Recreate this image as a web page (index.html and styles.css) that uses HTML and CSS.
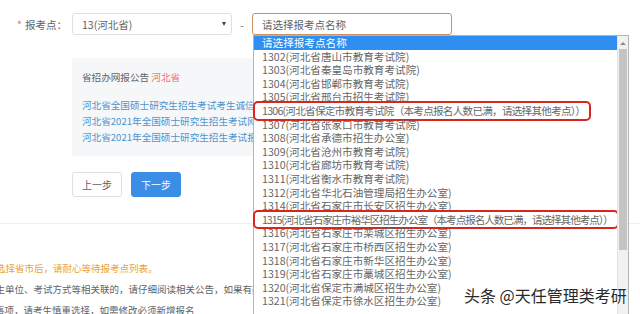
FILE: index.html
```html
<!DOCTYPE html>
<html lang="zh-CN">
<head>
<meta charset="utf-8">
<link rel="stylesheet" href="styles.css">
</head>
<body>
<div class="page">
  <div class="form-row">
    <div class="label"><span class="req">*</span>报考点：</div>
    <div class="select sel1"><span>13(河北省)</span><span class="caret"></span></div>
    <span class="dash">-</span>
    <div class="select sel2"><span>请选择报考点名称</span></div>
  </div>

  <div class="notice">
    <div class="notice-title">省招办网报公告 <span class="red">河北省</span></div>
    <div class="links">
      <a>河北省全国硕士研究生招生考试考生诚信考试承诺书</a>
      <a>河北省2021年全国硕士研究生招生考试网上报名公告</a>
      <a>河北省2021年全国硕士研究生招生考试报名须知</a>
    </div>
  </div>

  <div class="buttons">
    <button class="btn btn-plain">上一步</button>
    <button class="btn btn-primary">下一步</button>
  </div>

  <div class="divider"></div>

  <div class="tips">
    <p class="tip tip-warn">请选择省市后，请耐心等待报考点列表。</p>
    <p class="tip tip-2">招生单位、考试方式等相关联的，请仔细阅读相关公告，如果有疑问请咨询</p>
    <p class="tip tip-3">事项，请考生慎重选择，如需修改必须新增报名</p>
  </div>

  <div class="dropdown">
    <ul class="options">
      <li class="selected">请选择报考点名称</li>
      <li>1302(河北省唐山市教育考试院)</li>
      <li>1303(河北省秦皇岛市教育考试院)</li>
      <li>1304(河北省邯郸市教育考试院)</li>
      <li>1305(河北省邢台市招生考试院)</li>
      <li><span class="boxed b1">1306(河北省保定市教育考试院（本考点报名人数已满，请选择其他考点））</span></li>
      <li>1307(河北省张家口市教育考试院)</li>
      <li>1308(河北省承德市招生办公室)</li>
      <li>1309(河北省沧州市教育考试院)</li>
      <li>1310(河北省廊坊市教育考试院)</li>
      <li>1311(河北省衡水市教育考试院)</li>
      <li>1312(河北省华北石油管理局招生办公室)</li>
      <li>1314(河北省石家庄市长安区招生办公室)</li>
      <li><span class="boxed b2">1315(河北省石家庄市裕华区招生办公室（本考点报名人数已满，请选择其他考点））</span></li>
      <li>1316(河北省石家庄市栾城区招生办公室)</li>
      <li>1317(河北省石家庄市桥西区招生办公室)</li>
      <li>1318(河北省石家庄市新华区招生办公室)</li>
      <li>1319(河北省石家庄市藁城区招生办公室)</li>
      <li>1320(河北省保定市满城区招生办公室)</li>
      <li>1321(河北省保定市徐水区招生办公室)</li>
    </ul>
    <div class="scrollbar">
      <div class="sb-up"></div>
      <div class="sb-thumb"></div>
    </div>
  </div>

  <div class="watermark">头条 @天任管理类考研</div>
</div>
</body>
</html>
```

FILE: styles.css
```css
* { box-sizing: border-box; }
html, body { margin: 0; padding: 0; background: #fff; }
body {
  font-family: "Noto Sans CJK SC", "Microsoft YaHei", sans-serif;
  color: #606266;
  font-size: 10px;
  width: 640px;
  height: 314px;
  overflow: hidden;
}
.page { position: relative; width: 640px; height: 314px; overflow: hidden; }

.form-row {
  display: flex;
  align-items: center;
  height: 22px;
  margin-top: 13px;
  padding-left: 17px;
}
.label { width: 55px; font-size: 10.5px; color: #606266; white-space: nowrap; }
.req { color: #f56c6c; margin-right: 3px; }
.select {
  height: 22px;
  border: 1px solid #dcdfe6;
  border-radius: 3px;
  display: flex;
  align-items: center;
  font-size: 10.5px;
  color: #606266;
  background: #fff;
}
.sel1 { width: 160px; padding: 0 5px 0 9px; justify-content: space-between; }
.caret {
  width: 0; height: 0;
  border-left: 2.5px solid transparent;
  border-right: 2.5px solid transparent;
  border-top: 4px solid #444;
}
.dash { width: 20px; text-align: center; color: #606266; }
.sel2 { width: 200px; padding-left: 9px; border-color: #cf8f5f; }

.notice {
  margin: 23px 0 0 72px;
  width: 520px;
  height: 98px;
  background: #f6f7f9;
  padding: 11px 10px;
  font-size: 9.6px;
  line-height: 16px;
  white-space: nowrap;
  overflow: hidden;
}
.red { color: #f56c6c; }
.links { margin-top: 12px; display: flex; flex-direction: column; }
.links a { color: #4f94cf; text-decoration: none; }

.buttons { display: flex; gap: 9px; margin: 16px 0 0 72px; }
.btn {
  width: 50px; height: 25px;
  border-radius: 3px;
  font-family: inherit;
  font-size: 10px;
  padding: 0;
  cursor: pointer;
}
.btn-plain { background: #fff; border: 1px solid #dcdfe6; color: #606266; }
.btn-primary { background: #3a8ee6; border: 1px solid #3a8ee6; color: #fff; }

.divider { margin-top: 26px; height: 1px; background: #eceef2; width: 640px; }

.tips { margin-top: 34px; font-size: 9.5px; white-space: nowrap; }
.tip { margin: 0; height: 21px; line-height: 21px; }
.tip-warn { color: #e6a23c; margin-left: -13.5px; }
.tip-2 { margin-left: -14px; }
.tip-3 { margin-left: -5px; }

.dropdown {
  position: absolute;
  left: 253px;
  top: 35px;
  width: 376px;
  height: 282px;
  background: #fff;
  border: 1px solid #b5b5b5;
  display: flex;
}
.options {
  list-style: none;
  margin: 0;
  padding: 0;
  flex: 1;
  min-width: 0;
  font-size: 10.6px;
  color: #666;
}
.options li {
  height: 13.6px;
  line-height: 13.6px;
  padding-left: 8px;
  white-space: nowrap;
}
.options li.selected { background: #2e8ff0; color: #fff; }
.boxed {
  display: inline-block;
  margin-left: -6px;
  padding: 0 3px 0 6px;
  outline: 2px solid #d9261c;
  outline-offset: 1px;
  border-radius: 2px;
}
.b1 { letter-spacing: -0.75px; }
.b2 { letter-spacing: -1.05px; }
.scrollbar {
  width: 11px;
  flex: none;
  background: #f1f1f1;
  border-left: 1px solid #e2e2e2;
  display: flex;
  flex-direction: column;
  padding: 1px 1px 0;
}
.sb-up {
  height: 12px;
  display: flex;
  align-items: center;
  justify-content: center;
}
.sb-up::before {
  content: "";
  border-left: 3px solid transparent;
  border-right: 3px solid transparent;
  border-bottom: 3px solid #8a8a8a;
}
.sb-thumb { height: 201px; background: #c4c4c4; }

.watermark {
  position: absolute;
  left: 464px;
  top: 284px;
  font-size: 16px;
  line-height: 22px;
  color: #2a2a2a;
  white-space: nowrap;
  text-shadow: 0 0 2px #fff, 0 0 2px #fff, 0 0 3px #fff;
}
```
